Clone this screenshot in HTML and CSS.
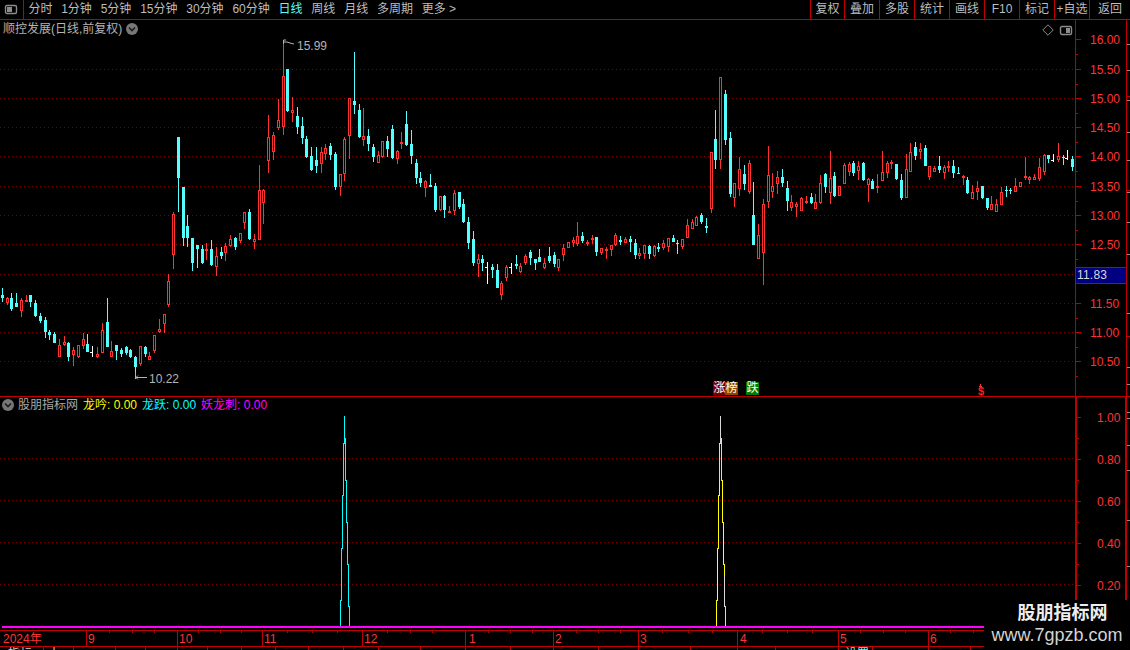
FILE: index.html
```html
<!DOCTYPE html>
<html lang="zh">
<head>
<meta charset="utf-8">
<title>顺控发展 日线</title>
<link rel="stylesheet" href="styles.css">
</head>
<body>
<div class="app">
  <header class="toolbar">
    <div class="tool-toggle">
      <svg class="icon-panel" width="14" height="11" viewBox="0 0 14 11">
        <rect class="icon-frame" x="1.5" y="1.5" width="11" height="8" rx="1.5"/>
        <rect class="icon-fill" x="3" y="3" width="5" height="5"/>
      </svg>
    </div>
    <nav class="periods">
      <span class="period">分时</span>
      <span class="period">1分钟</span>
      <span class="period">5分钟</span>
      <span class="period">15分钟</span>
      <span class="period">30分钟</span>
      <span class="period">60分钟</span>
      <span class="period active">日线</span>
      <span class="period">周线</span>
      <span class="period">月线</span>
      <span class="period">多周期</span>
      <span class="period">更多 &gt;</span>
    </nav>
    <div class="actions">
      <span class="action first">复权</span>
      <span class="action">叠加</span>
      <span class="action">多股</span>
      <span class="action">统计</span>
      <span class="action">画线</span>
      <span class="action">F10</span>
      <span class="action">标记</span>
      <span class="action">+自选</span>
      <span class="action last">返回</span>
    </div>
  </header>

  <section class="pane price-pane">
    <svg id="price" class="plot" viewBox="0 20 1130 377" width="1130" height="377"></svg>
    <div class="pane-title">
      <span>顺控发展(日线,前复权)</span>
      <svg class="icon-chevron" width="12" height="12" viewBox="0 0 12 12">
        <circle class="chev-disc" cx="6" cy="6" r="6"/>
        <path class="chev-line" d="M3 4.5 6 7.5 9 4.5"/>
      </svg>
    </div>
    <div class="pane-tools">
      <svg width="12" height="12" viewBox="0 0 12 12"><path class="icon-frame thin" d="M6 .8 11.2 6 6 11.2 .8 6Z"/></svg>
      <svg width="14" height="11" viewBox="0 0 14 11">
        <rect class="icon-frame" x="1.5" y="1.5" width="11" height="8" rx="1.5"/>
        <rect class="icon-fill" x="7" y="3" width="4" height="5"/>
      </svg>
    </div>
    <div class="last-price">11.83</div>
    <div class="tags">
      <span class="tag tag-rise">涨</span><span class="tag tag-list">榜</span><span class="tag tag-fall">跌</span>
    </div>
  </section>

  <section class="pane index-pane">
    <svg id="index" class="plot" viewBox="0 397 1130 233" width="1130" height="233"></svg>
    <div class="legend">
      <svg class="icon-chevron" width="12" height="12" viewBox="0 0 12 12">
        <circle class="chev-disc" cx="6" cy="6" r="6"/>
        <path class="chev-line" d="M3 4.5 6 7.5 9 4.5"/>
      </svg>
      <span class="legend-name">股朋指标网</span>
      <span class="c-yellow">龙吟: 0.00</span>
      <span class="c-cyan">龙跃: 0.00</span>
      <span class="c-magenta">妖龙刺: 0.00</span>
    </div>
  </section>

  <svg id="time" class="plot" viewBox="0 630 1130 20" width="1130" height="20"></svg>

  <aside class="watermark">
    <div class="wm-name">股朋指标网</div>
    <div class="wm-url">www.7gpzb.com</div>
  </aside>
</div>
<script src="chart.js"></script>
</body>
</html>
```

FILE: styles.css
```css
* { box-sizing: border-box; }
html, body { margin: 0; padding: 0; background: #000; }
body { font: 12px "Liberation Sans", "Noto Sans CJK SC", sans-serif; color: #bdbdbd; }

.app {
  position: relative;
  width: 1130px;
  height: 650px;
  overflow: hidden;
  display: flex;
  flex-direction: column;
  background: #000;
}

/* toolbar */
.toolbar {
  display: flex;
  height: 20px;
  flex: none;
  border-bottom: 1px solid #c00000;
  line-height: 19px;
}
.tool-toggle {
  width: 24px;
  border-right: 1px solid #c00000;
  display: flex;
  align-items: center;
  padding-left: 4px;
}
.periods { display: flex; }
.period { padding: 0 4.4px; white-space: nowrap; }
.period.active { color: #54ffff; }
.actions { display: flex; margin-left: auto; }
.action {
  width: 35px;
  border-left: 1px solid #c00000;
  text-align: center;
  white-space: nowrap;
}
.action.first { width: 34px; }
.action.last { width: 41px; }

/* icons */
.icon-frame { fill: none; stroke: #8c8c8c; stroke-width: 1.4; }
.icon-frame.thin { stroke-width: 1; }
.icon-fill { fill: #8c8c8c; }
.chev-disc { fill: #777; }
.chev-line { fill: none; stroke: #1c1c1c; stroke-width: 1.6; }

/* panes */
.pane { position: relative; flex: none; }
.plot { display: block; flex: none; }
.price-pane { height: 377px; }
.index-pane { height: 233px; }

.pane-title {
  position: absolute;
  left: 3px;
  top: 0;
  height: 18px;
  display: flex;
  align-items: center;
  gap: 4px;
  line-height: 18px;
  color: #b4b4b4;
}
.pane-tools {
  position: absolute;
  left: 1042px;
  top: 4px;
  display: flex;
  align-items: center;
  gap: 5px;
}
.last-price {
  position: absolute;
  left: 1075px;
  top: 247px;
  width: 52px;
  height: 17px;
  padding-left: 1px;
  background: #000080;
  border: 1px solid #c00000;
  color: #d8d8d8;
  line-height: 15px;
  letter-spacing: 0.2px;
}
.tags {
  position: absolute;
  left: 713px;
  top: 362px;
  display: flex;
  height: 13px;
}
.tag {
  width: 13px;
  height: 13px;
  color: #fff;
  line-height: 13px;
  text-align: center;
}
.tag-rise { background: #7a0000; }
.tag-list { background: #8a4a00; margin-left: -1px; }
.tag-fall { background: #007a00; margin-left: 8px; }

.legend {
  position: absolute;
  left: 2px;
  top: 1px;
  height: 14px;
  display: flex;
  align-items: center;
  gap: 5px;
  line-height: 14px;
}
.legend .icon-chevron { margin-right: -1px; }
.legend-name { color: #a8a8a8; }
.c-yellow { color: #ffff00; }
.c-cyan { color: #00ffff; }
.c-magenta { color: #ff00ff; }

/* svg parts drawn by chart.js */
.grid { stroke: #800000; stroke-width: 1; stroke-dasharray: 1 3; }
.frame { stroke: #c00000; stroke-width: 1; shape-rendering: crispEdges; fill: none; }
.frame-wide { stroke: #c00000; stroke-width: 2; shape-rendering: crispEdges; }
.rail-tick { stroke: #8c8c8c; stroke-width: 1; shape-rendering: crispEdges; }
.axis-text { fill: #ff3232; font-size: 12px; font-family: "Liberation Sans", "Noto Sans CJK SC", sans-serif; }
.note-text { fill: #b4b4b4; font-size: 12px; font-family: "Liberation Sans", sans-serif; }
.note-line { stroke: #b4b4b4; stroke-width: 1; fill: none; }
.wick-r { stroke: #ff3232; shape-rendering: crispEdges; }
.wick-c { stroke: #54ffff; shape-rendering: crispEdges; }
.wick-w { stroke: #fff; shape-rendering: crispEdges; }
.body-r { fill: #000; stroke: #ff3232; stroke-width: 1; shape-rendering: crispEdges; }
.body-c { fill: #54ffff; shape-rendering: crispEdges; }
.limit-mark { fill: #ff1e1e; font-size: 11px; font-weight: bold; font-family: "Liberation Sans", sans-serif; }
.peak-c { stroke: #00ffff; fill: none; stroke-width: 1; shape-rendering: crispEdges; }
.peak-y { stroke: #ffff00; fill: none; stroke-width: 1; shape-rendering: crispEdges; }
.peak-g { stroke: #d8d8d8; fill: none; stroke-width: 1; shape-rendering: crispEdges; }
.baseline { stroke: #ff00ff; stroke-width: 2; shape-rendering: crispEdges; }
.strip-text { fill: #d0d0d0; font-size: 12px; font-family: "Noto Sans CJK SC", sans-serif; }
.strip-cyan { fill: #54ffff; font-size: 12px; font-family: "Noto Sans CJK SC", sans-serif; }

/* watermark sits over the bottom right corner of the chart */
.watermark {
  position: absolute;
  left: 984px;
  top: 600px;
  width: 146px;
  height: 50px;
  background: #000;
  text-align: center;
  color: #ededed;
}
.wm-name {
  font: bold 18px/23px "Noto Sans CJK SC", sans-serif;
  padding-left: 11px;
}
.wm-url {
  margin-top: 2px;
  font: 18px/20px "Liberation Sans", sans-serif;
  color: #d4d4d4;
}
```

FILE: chart.js
```js
// Candles: [x, wick top, body top, body bottom, wick bottom, colour], in 1/3 px from each group's origin.
const groups = [
  { ox: 0, oy: 270, rows: [
    [7,55,75,85,95,'c'],[22,80,85,100,105,'r'],[34,70,85,118,122,'c'],[49,70,100,110,112,'c'],
    [64,85,90,122,140,'r'],[79,75,90,95,97,'r'],[91,75,75,95,110,'c'],[106,90,100,137,140,'c'],
    [121,130,138,152,158,'c'],[136,140,150,185,203,'c'],[148,180,186,195,210,'c'],[163,185,193,218,220,'c'],
    [178,208,226,260,260,'r'],[193,197,217,225,228,'r'],[205,215,218,260,272,'c'],[220,232,240,255,288,'r'],
    [235,226,226,262,265,'r'],[250,190,208,227,238,'r'],[262,192,222,246,246,'c'],[277,228,245,245,260,'w'],
    [292,232,252,260,265,'r'],[307,160,180,248,248,'r'],[322,85,156,230,232,'c'],[334,213,244,260,260,'r'],
    [349,225,226,242,270,'c'],[364,235,240,252,260,'c'],[379,228,232,250,255,'c'],[391,238,240,262,265,'c'],
    [406,258,262,290,325,'c'],[421,228,228,282,288,'r'],[436,228,232,252,260,'c'],[448,245,258,270,270,'r'],
    [463,195,195,242,248,'r'],[478,148,178,185,188,'r'],[493,132,132,162,188,'r'],[505,12,33,105,110,'r']
  ]},
  { ox: 160, oy: 30, rows: [
    [40,545,552,674,716,'r'],[55,321,321,443,545,'c'],[70,471,471,623,647,'c'],[82,555,588,623,650,'c'],
    [97,624,624,698,723,'c'],[112,645,645,657,713,'c'],[127,645,656,698,703,'c'],[139,640,657,662,690,'r'],
    [154,630,657,705,707,'c'],[169,650,678,710,738,'r'],[184,650,666,678,688,'c'],[196,640,648,670,692,'r'],
    [211,615,627,647,650,'r'],[226,622,624,650,660,'c'],[241,610,610,632,638,'r'],[253,545,547,578,597,'r'],
    [268,537,546,627,630,'c'],[283,612,628,637,656,'r'],[298,405,481,629,630,'r'],[310,478,481,518,582,'r'],
    [325,255,322,392,428,'r'],[340,305,316,365,390,'r'],[355,207,270,293,300,'r'],[370,30,138,290,315,'r'],
    [382,117,117,243,246,'c'],[397,202,240,248,275,'r'],[412,232,258,290,312,'c'],[427,262,288,323,342,'c'],
    [439,318,327,380,385,'c'],[454,350,378,420,422,'c'],[469,350,390,407,428,'c'],[484,350,366,401,428,'r'],
    [496,342,355,371,390,'r'],[511,340,348,375,390,'c'],[526,365,372,470,480,'c'],[541,432,433,472,498,'r'],
    [553,320,328,433,452,'r'],[568,203,205,317,387,'r'],[583,67,213,224,252,'c'],[598,222,240,320,325,'c'],
    [610,235,318,329,347,'r'],[625,297,318,342,362,'c'],[640,343,351,380,395,'c'],[655,362,376,398,398,'r'],
    [667,332,332,382,383,'r'],[682,318,333,357,382,'c'],[697,285,297,385,387,'c'],[712,360,364,386,402,'r'],
    [724,305,336,341,357,'r'],[739,243,282,345,347,'c'],[754,300,342,377,402,'c'],[769,388,400,444,462,'c'],
    [781,427,444,459,470,'c'],[796,450,453,473,500,'r'],[811,432,465,471,472,'c'],[826,460,469,540,545,'c']
  ]},
  { ox: 440, oy: 110, rows: [
    [0,258,258,300,303,'r'],[13,256,258,300,324,'c'],[28,288,304,308,310,'r'],[43,240,250,303,315,'r'],
    [58,246,246,290,296,'c'],[70,267,282,337,340,'c'],[85,321,336,399,417,'c'],[100,363,387,459,468,'c'],
    [115,432,447,462,501,'r'],[127,435,447,459,483,'c'],[142,456,472,472,522,'w'],[157,462,471,480,504,'c'],
    [172,462,480,534,534,'c'],[184,513,519,555,570,'r'],[199,465,471,504,513,'r'],[214,459,472,472,492,'w'],
    [229,435,462,469,477,'c'],[241,460,468,486,489,'r'],[256,432,438,459,465,'r'],[271,420,426,444,465,'c'],
    [286,447,447,459,480,'c'],[298,417,441,456,456,'c'],[313,444,459,474,477,'r'],[328,411,438,453,459,'c'],
    [343,426,435,462,471,'c'],[355,447,447,474,483,'r'],[370,402,414,435,453,'r'],[385,396,396,414,414,'r'],
    [400,381,390,399,411,'r'],[412,336,378,402,408,'r'],[427,366,378,393,399,'c'],[442,390,396,402,408,'r'],
    [457,375,384,390,402,'r'],[469,381,381,426,438,'c'],[484,414,415,429,435,'r'],[499,411,417,423,447,'r'],
    [514,405,405,420,438,'r'],[526,369,375,405,408,'r'],[541,378,390,396,405,'c'],[556,381,387,399,400,'r'],
    [571,378,387,396,426,'c'],[586,387,399,435,447,'c'],[598,414,429,438,447,'r'],[613,405,405,432,447,'r'],
    [628,405,408,432,447,'c'],[643,405,408,438,441,'r'],[655,399,411,417,426,'c'],[670,390,399,414,420,'r'],
    [685,384,384,411,426,'r'],[700,375,384,396,396,'c'],[712,390,400,402,432,'c'],[727,387,387,411,417,'r'],
    [742,327,345,384,384,'r'],[757,327,336,357,357,'r'],[769,318,321,348,348,'r'],[784,309,315,336,342,'c'],
    [799,324,348,354,369,'c']
  ]},
  { ox: 680, oy: 60, rows: [
    [94,277,277,447,459,'r'],[106,150,237,300,327,'c'],[121,52,52,300,327,'r'],[136,90,102,240,255,'c'],
    [151,216,234,402,411,'c'],[163,370,370,414,441,'r'],[178,291,327,387,408,'r'],[193,315,342,372,390,'c'],
    [208,300,309,396,402,'r'],[220,366,465,555,555,'c'],[235,492,525,597,597,'r'],[250,417,432,579,675,'r'],
    [265,258,345,426,444,'r'],[277,339,378,396,414,'r'],[292,333,351,372,402,'r'],[307,327,351,369,381,'c'],
    [322,363,384,423,453,'c'],[334,405,426,444,453,'r'],[349,426,432,441,471,'r']
  ]},
  { ox: 760, oy: 130, rows: [
    [124,201,204,243,243,'r'],[139,198,213,216,222,'r'],[154,189,201,219,222,'c'],[166,192,216,237,237,'r'],
    [181,135,159,219,222,'r'],[196,129,132,171,189,'c'],[211,63,144,189,222,'r'],[223,126,138,198,201,'c'],
    [238,168,168,198,198,'r'],[253,99,105,162,162,'r'],[268,96,102,126,138,'r'],[280,93,99,129,138,'c'],
    [295,93,108,123,150,'r'],[310,96,99,150,153,'c'],[325,144,147,165,216,'r'],[337,147,153,177,177,'c'],
    [352,132,168,174,189,'r'],[367,63,126,153,153,'r'],[382,93,99,129,144,'r'],[394,90,96,102,117,'r'],
    [409,102,102,147,150,'c'],[424,132,150,204,210,'c'],[439,72,117,204,204,'r'],[451,39,66,126,126,'r'],
    [466,36,51,78,90,'c'],[481,39,57,66,87,'r'],[496,45,54,108,108,'c'],[508,108,108,141,150,'r'],
    [523,108,114,126,126,'r'],[538,78,108,120,129,'c'],[553,105,111,129,147,'r'],[565,93,108,114,126,'r'],
    [580,90,108,129,144,'c'],[595,111,129,132,132,'c'],[610,135,138,144,165,'r'],[622,141,150,189,192,'c'],
    [637,165,186,207,207,'r'],[652,153,174,186,210,'r'],[667,168,168,204,207,'c'],[682,204,204,234,240,'c'],
    [694,198,222,240,240,'r'],[709,207,222,246,246,'r'],[724,171,186,225,225,'r'],[739,168,180,183,201,'c'],
    [751,174,180,183,192,'c'],[766,144,168,186,186,'r'],[781,156,156,171,171,'r'],[796,81,138,144,150,'r'],
    [808,138,141,150,162,'r'],[823,132,141,150,150,'r'],[838,84,111,147,153,'r'],[853,72,75,126,135,'r'],
    [865,75,75,87,99,'c'],[880,72,90,90,96,'w'],[895,39,78,90,96,'r'],[910,75,81,84,105,'c'],
    [922,60,84,84,90,'w'],[937,78,87,111,123,'c']
  ]}
];

const NS = 'http://www.w3.org/2000/svg';
function add(svg, tag, cls, attrs, text) {
  const el = document.createElementNS(NS, tag);
  if (cls) el.setAttribute('class', cls);
  for (const k in attrs) el.setAttribute(k, attrs[k]);
  if (text !== undefined) el.textContent = text;
  svg.appendChild(el);
  return el;
}
const hline = (svg, cls, x1, x2, y) => add(svg, 'line', cls, { x1, x2, y1: y + 0.5, y2: y + 0.5 });
const vline = (svg, cls, x, y1, y2) => add(svg, 'line', cls, { x1: x + 0.5, x2: x + 0.5, y1, y2 });
const label = (svg, cls, x, y, t) => add(svg, 'text', cls, { x, y }, t);

/* price pane */
const price = document.getElementById('price');
[69, 98, 127, 156, 186, 215, 244, 274, 303, 332, 361].forEach(y => hline(price, 'grid', 0, 1075, y));
hline(price, 'frame', 0, 1130, 396);
vline(price, 'frame', 1075, 20, 396);
vline(price, 'frame', 1126, 20, 396);

const levels = [['16.00',39],['15.50',69],['15.00',98],['14.50',127],['14.00',156],['13.50',186],['13.00',215],['12.50',244],['11.50',303],['11.00',332],['10.50',361]];
levels.forEach(([t, y]) => {
  hline(price, 'frame', 1075, 1081, y);
  hline(price, 'frame', 1075, 1078, y + 15);
  label(price, 'axis-text', 1090, y + 5, t);
});
[44, 70, 100, 132, 160, 192, 222, 254, 313, 367, 384].forEach(y => hline(price, 'rail-tick', 1127, 1130, y));
[96, 190, 336].forEach(y => hline(price, 'frame', 1127, 1130, y));

for (const g of groups) {
  for (const [x, wt, bt, bb, wb, c] of g.rows) {
    const px = Math.floor(g.ox + x / 3);
    const y = v => Math.round(g.oy + v / 3);
    vline(price, 'wick-' + c, px, y(wt), y(wb));
    if (c === 'w') {
      hline(price, 'wick-w', px - 2, px, y(bt));
    } else if (c === 'r') {
      add(price, 'rect', 'body-r', { x: px - 0.5, y: y(bt) + 0.5, width: 2, height: Math.max(1, y(bb) - y(bt) - 1) });
    } else {
      add(price, 'rect', 'body-c', { x: px - 1, y: y(bt), width: 3, height: Math.max(1, y(bb) - y(bt)) });
    }
  }
}

/* high and low notes */
add(price, 'path', 'note-line', { d: 'M283.5 44V40H286M284 42H287L290 43 294 44' });
label(price, 'note-text', 297, 50, '15.99');
add(price, 'path', 'note-line', { d: 'M135.5 372V379M136 377.5H147M138 375.5 136 377.5 138 379.5' });
label(price, 'note-text', 149, 383, '10.22');
label(price, 'limit-mark', 978, 395, '$');
add(price, 'path', 'wick-r', { d: 'M980.5 384V386M979 386H982' });

/* index pane */
const index = document.getElementById('index');
[458, 500, 542, 584].forEach(y => hline(index, 'grid', 0, 1075, y));
add(index, 'line', 'frame-wide', { x1: 1076, x2: 1076, y1: 397, y2: 630 });
add(index, 'line', 'frame-wide', { x1: 1126, x2: 1126, y1: 397, y2: 630 });
[['1.00',417],['0.80',459],['0.60',501],['0.40',543],['0.20',585]].forEach(([t, y]) => {
  hline(index, 'frame', 1077, 1081, y);
  hline(index, 'frame', 1077, 1079, y + 21);
  label(index, 'axis-text', 1097, y + 5, t);
});
[412, 418, 445, 470, 520, 566].forEach(y => hline(index, 'rail-tick', 1127, 1130, y));

const leftSteps = o => `M${o + 4.5} 416V443H${o + 3.5}V495H${o + 2.5}V548H${o + 1.5}V600H${o + 0.5}V626`;
const rightSteps = o => `M${o + 4.5} 416V438H${o + 5.5}V480H${o + 6.5}V522H${o + 7.5}V564H${o + 8.5}V606H${o + 9.5}V626`;
add(index, 'path', 'peak-c', { d: leftSteps(340) });
add(index, 'path', 'peak-c', { d: rightSteps(340) });
add(index, 'path', 'peak-y', { d: leftSteps(716) });
add(index, 'path', 'peak-y', { d: rightSteps(716) });
add(index, 'path', 'peak-g', { d: 'M720.5 416V443H719.5V480M720.5 416V438H721.5V480' });
add(index, 'path', 'peak-g', { d: 'M724.5 575V606H725.5V626' });
add(index, 'line', 'baseline', { x1: 2, x2: 1075, y1: 627, y2: 627 });

/* time axis */
const time = document.getElementById('time');
hline(time, 'frame', 0, 1075, 630);
hline(time, 'frame', 0, 1075, 646);
[['2024年',3,null],['9',88,86],['10',179,177],['11',264,262],['12',364,362],['1',469,465],['2',555,553],['3',640,638],['4',740,737],['5',840,838],['6',930,928]]
  .forEach(([t, x, sep]) => {
    if (sep !== null) vline(time, 'frame', sep, 630, 646);
    label(time, 'axis-text', x, 643, t);
  });
[109,132,154,198,220,241,287,312,337,387,410,432,488,510,532,576,598,620,662,688,712,762,787,812,860,883,905,950,973]
  .forEach(x => vline(time, 'frame', x, 631, 633));
[43,73,115,145,177,207,241,275,308,343,378,420,465,510,553,598,638,690,737,775,838,872,928,970]
  .forEach(x => vline(time, 'frame', x, 647, 650));
label(time, 'strip-text', 8, 658, '指标');
label(time, 'strip-text', 48, 658, '十');
label(time, 'strip-cyan', 845, 658, '设置');
```
